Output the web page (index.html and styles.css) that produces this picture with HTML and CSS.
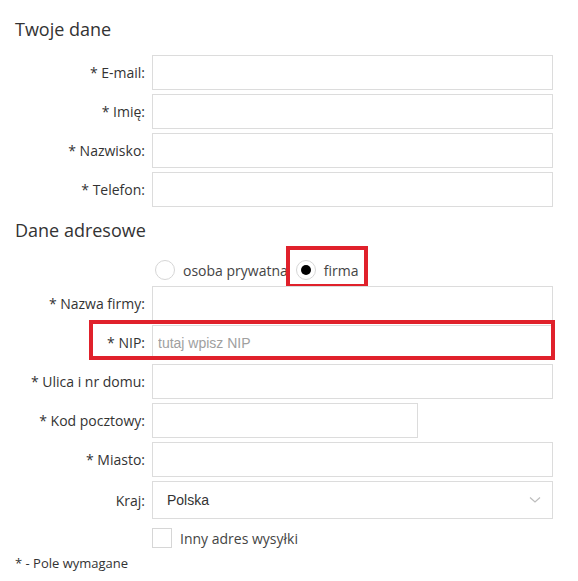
FILE: index.html
```html
<!DOCTYPE html>
<html>
<head>
    <title>Twoje dane</title>
    <link rel="stylesheet" href="styles.css">
</head>
<body>
    <div class="form">
        <h2 class="section-title first">Twoje dane</h2>
        <div class="row">
            <label for="email">* E-mail:</label>
            <input type="text" id="email" class="field">
        </div>
        <div class="row">
            <label for="imie">* Imię:</label>
            <input type="text" id="imie" class="field">
        </div>
        <div class="row">
            <label for="nazwisko">* Nazwisko:</label>
            <input type="text" id="nazwisko" class="field">
        </div>
        <div class="row">
            <label for="telefon">* Telefon:</label>
            <input type="text" id="telefon" class="field">
        </div>

        <h2 class="section-title">Dane adresowe</h2>
        <div class="radio-row">
            <div class="radio-option">
                <span class="radio"></span>
                <span class="radio-text">osoba prywatna</span>
            </div>
            <div class="radio-option firma">
                <span class="radio checked"></span>
                <span class="radio-text">firma</span>
                <span class="mark mark-firma"></span>
            </div>
        </div>
        <div class="row">
            <label for="firma">* Nazwa firmy:</label>
            <input type="text" id="firma" class="field">
        </div>
        <div class="row nip-row">
            <label for="nip">* NIP:</label>
            <input type="text" id="nip" class="field nip" placeholder="tutaj wpisz NIP">
            <span class="mark mark-nip"></span>
        </div>
        <div class="row">
            <label for="ulica">* Ulica i nr domu:</label>
            <input type="text" id="ulica" class="field">
        </div>
        <div class="row">
            <label for="kod">* Kod pocztowy:</label>
            <input type="text" id="kod" class="field short">
        </div>
        <div class="row">
            <label for="miasto">* Miasto:</label>
            <input type="text" id="miasto" class="field">
        </div>
        <div class="row">
            <label>Kraj:</label>
            <div class="select">
                <span>Polska</span>
                <svg width="12" height="8" viewBox="0 0 12 8"><path d="M1 1.5 L6 6 L11 1.5" fill="none" stroke="#bdbdbd" stroke-width="1.2"/></svg>
            </div>
        </div>
        <div class="check-row">
            <span class="checkbox"></span>
            <span class="check-text">Inny adres wysyłki</span>
        </div>
        <div class="footer">* - Pole wymagane</div>
    </div>
</body>
</html>
```

FILE: styles.css
```css
body {
    margin: 0;
    font-family: "Open Sans", Arial, sans-serif;
    color: #333;
    background-color: #fff;
}
.form {
    padding: 0 0 0 15px;
}
.section-title {
    font-size: 18px;
    font-weight: normal;
    line-height: 24px;
    margin: 11px 0 0 0;
    color: #333;
}
.section-title.first {
    margin: 17px 0 14px 0;
}
.row {
    display: flex;
    align-items: center;
    margin-bottom: 4px;
    position: relative;
}
.row label {
    width: 137px;
    padding-right: 7px;
    box-sizing: border-box;
    text-align: right;
    font-size: 14px;
}
.field {
    width: 401px;
    height: 35px;
    border: 1px solid #dcdcdc;
    box-sizing: border-box;
    margin: 0;
    padding: 0 5px;
    font-family: "Liberation Sans", Arial, sans-serif;
    font-size: 14px;
    outline: none;
}
.field.short {
    width: 266px;
}
.nip::placeholder {
    color: #a0a0a0;
}
.select {
    width: 401px;
    height: 38px;
    border: 1px solid #dcdcdc;
    box-sizing: border-box;
    display: flex;
    align-items: center;
    justify-content: space-between;
    padding: 0 11px 0 14px;
    font-family: "Liberation Sans", Arial, sans-serif;
    font-size: 14px;
    color: #333;
}
.radio-row {
    display: flex;
    align-items: center;
    height: 20px;
    margin: 18px 0 6px 140px;
}
.radio-option {
    display: flex;
    align-items: center;
    position: relative;
}
.radio-option.firma {
    margin-left: 8px;
}
.radio {
    width: 20px;
    height: 20px;
    border: 1px solid #d6d6d6;
    border-radius: 50%;
    box-sizing: border-box;
    display: flex;
    align-items: center;
    justify-content: center;
}
.radio.checked::after {
    content: "";
    width: 10px;
    height: 10px;
    border-radius: 50%;
    background-color: #000;
}
.radio-text {
    font-size: 14px;
    margin-left: 8px;
    color: #444;
}
.mark {
    position: absolute;
    border: 4px solid #e0212b;
    box-sizing: border-box;
}
.mark-firma {
    left: -10px;
    top: -14px;
    width: 82px;
    height: 42px;
}
.mark-nip {
    left: 74px;
    top: -5px;
    width: 466px;
    height: 40px;
}
.check-row {
    display: flex;
    align-items: center;
    margin: 9px 0 0 137px;
}
.checkbox {
    width: 20px;
    height: 20px;
    border: 1px solid #d6d6d6;
    box-sizing: border-box;
}
.check-text {
    font-size: 14px;
    margin-left: 8px;
    color: #444;
}
.footer {
    font-size: 13px;
    margin-top: 6px;
    color: #333;
}
```
